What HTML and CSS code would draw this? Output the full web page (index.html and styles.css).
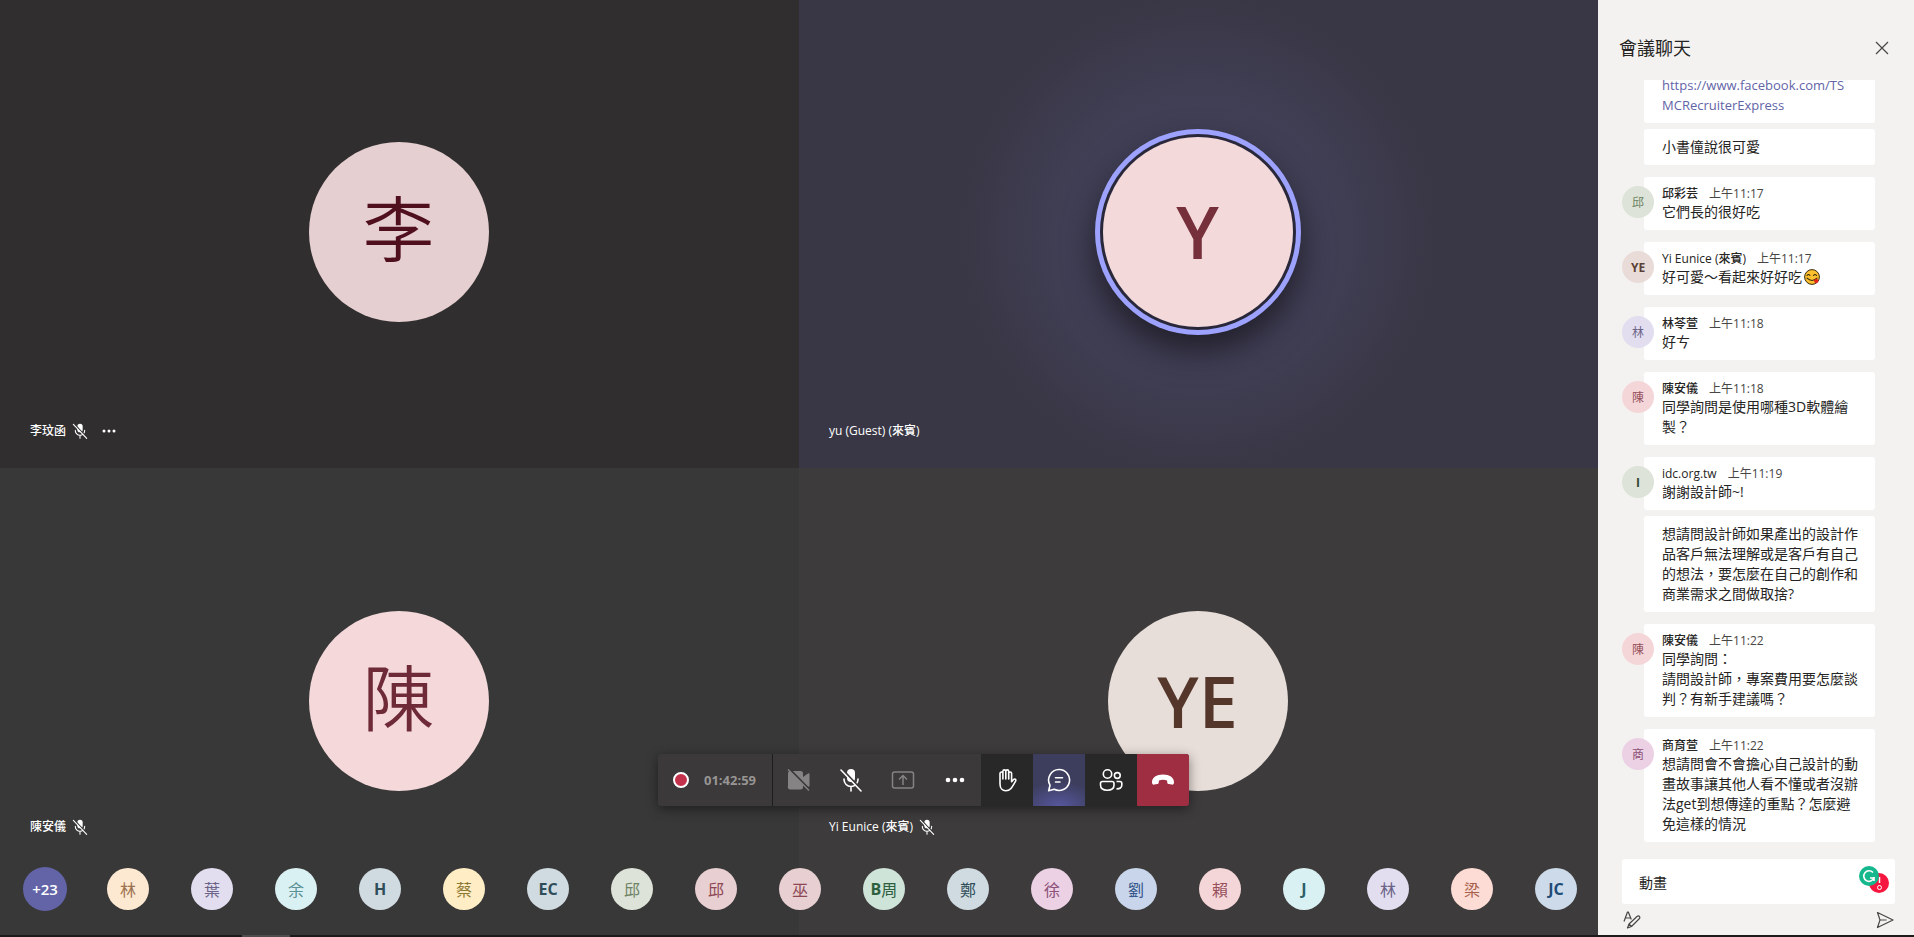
FILE: index.html
```html
<!DOCTYPE html>
<html lang="zh-Hant">
<head>
    <meta charset="UTF-8">
    <meta name="viewport" content="width=device-width, initial-scale=1.0">
    <title>會議聊天</title>
    <link rel="stylesheet" href="styles.css">
</head>
<body>

    <svg class="sprite" aria-hidden="true">
        <symbol id="mic-off" viewBox="0 0 24 24">
            <rect x="8" y="1" width="8" height="13" rx="4" fill="currentColor"/>
            <path d="M5 11v.5a7 7 0 0 0 14 0V11M12 18.500V23" fill="none" stroke="currentColor" stroke-width="1.600" stroke-linecap="round"/>
            <path d="M3.500 1.500l19 20.500" stroke="#3b393a" stroke-width="2"/>
            <path d="M2 2l20 21" stroke="currentColor" stroke-width="1.600" stroke-linecap="round"/>
        </symbol>
    </svg>

    <div class="app">
        <main class="stage">
            <section class="tile tile-li">
                <div class="face">李</div>
                <div class="name">李玟函
                    <svg class="name-mic"><use href="#mic-off"/></svg>
                    <button class="name-more" aria-label="更多選項">
                        <svg viewBox="0 0 14 4" width="14" height="4" fill="#fff"><circle cx="2" cy="2" r="1.500"/><circle cx="7" cy="2" r="1.500"/><circle cx="12" cy="2" r="1.500"/></svg>
                    </button>
                </div>
            </section>
            <section class="tile tile-yu">
                <div class="face face-speaking">Y</div>
                <div class="name">yu (Guest) (來賓)</div>
            </section>
            <section class="tile tile-chen">
                <div class="face">陳</div>
                <div class="name">陳安儀
                    <svg class="name-mic"><use href="#mic-off"/></svg>
                </div>
            </section>
            <section class="tile tile-ye">
                <div class="face">YE</div>
                <div class="name">Yi Eunice (來賓)
                    <svg class="name-mic"><use href="#mic-off"/></svg>
                </div>
            </section>

            <div class="strip">
                <button class="strip-more">+23</button>
                <ul class="people">
                    <li class="orange">林</li>
                    <li class="lilac">葉</li>
                    <li class="cyan">余</li>
                    <li class="steel"><b>H</b></li>
                    <li class="gold">蔡</li>
                    <li class="steel"><b>EC</b></li>
                    <li class="sage">邱</li>
                    <li class="rose">邱</li>
                    <li class="rose">巫</li>
                    <li class="mint"><b>B</b>周</li>
                    <li class="steel">鄭</li>
                    <li class="orchid">徐</li>
                    <li class="blue">劉</li>
                    <li class="pink">賴</li>
                    <li class="cyan dark"><b>J</b></li>
                    <li class="lilac">林</li>
                    <li class="peach">梁</li>
                    <li class="sky"><b>JC</b></li>
                </ul>
            </div>

            <div class="toolbar">
                <div class="record">
                    <span class="record-dot"></span>
                    <span>01:42:59</span>
                </div>
                <button class="off" aria-label="開啟相機">
                    <svg viewBox="0 0 24 24">
                        <path d="M3.500 3h10A2.500 2.500 0 0 1 16 5.500v3.500l5-3.500q1.500-1 1.500 1v11q0 2-1.500 1l-5-3.500v4a2.500 2.500 0 0 1-2.500 2.500h-10A2.500 2.500 0 0 1 1 18V5.500A2.500 2.500 0 0 1 3.500 3z" fill="currentColor"/>
                        <path d="M2.500 1l21 21.500" stroke="#3b393a" stroke-width="2"/>
                        <path d="M1 1.500l21 21" stroke="currentColor" stroke-width="1.500"/>
                    </svg>
                </button>
                <button aria-label="取消靜音">
                    <svg><use href="#mic-off"/></svg>
                </button>
                <button class="off" aria-label="分享">
                    <svg viewBox="0 0 24 24" fill="none" stroke="currentColor" stroke-width="1.500">
                        <rect x="1.500" y="4" width="21" height="16" rx="2"/>
                        <path d="M12 17V8M8 11.500L12 7.500l4 4"/>
                    </svg>
                </button>
                <button aria-label="更多動作">
                    <svg viewBox="0 0 24 24" fill="currentColor"><circle cx="5" cy="12" r="2.300"/><circle cx="12" cy="12" r="2.300"/><circle cx="19" cy="12" r="2.300"/></svg>
                </button>
                <button class="dark" aria-label="舉手">
                    <svg viewBox="1 0 24 24" fill="none" stroke="currentColor" stroke-width="1.600" stroke-linecap="round" stroke-linejoin="round">
                        <path d="M6 12V5.500a1.400 1.400 0 0 1 2.900 0V11V3.300a1.400 1.400 0 0 1 2.900 0V11V3.300a1.400 1.400 0 0 1 2.900 0V11V5.500a1.400 1.400 0 0 1 2.900 0v8.200l2-2.200c1-1 2.900-.2 2.100 1.400-1.700 3-3.200 5.800-5 7.800-1.300 1.400-2.800 2-5 2C8.500 22.700 6 20 6 16z"/>
                    </svg>
                </button>
                <button class="active" aria-label="聊天">
                    <svg viewBox="0 0 24 24" fill="none" stroke="currentColor" stroke-width="1.600" stroke-linecap="round" stroke-linejoin="round">
                        <path d="M12 1.500A10.500 10.500 0 1 1 7.200 21.300L1.700 22.700l1.300-5.500A10.500 10.500 0 0 1 12 1.500z"/>
                        <path d="M8.500 9.700h7M8.500 14h4.500"/>
                    </svg>
                </button>
                <button class="dark" aria-label="參與者">
                    <svg viewBox="0 0 24 24" fill="none" stroke="currentColor" stroke-width="1.600">
                        <circle cx="8.500" cy="6" r="4.200"/>
                        <circle cx="18.300" cy="7.500" r="2.900"/>
                        <path d="M3.500 13.500h9.500q2 0 2 2v1.500c0 3.500-2.500 5.200-6.700 5.200S1.500 20.500 1.500 17v-1.500q0-2 2-2z"/>
                        <path d="M17.500 13.500H21q1.800 0 1.800 1.800V17c0 2.700-2 4-5.300 3.900"/>
                    </svg>
                </button>
                <button class="hangup" aria-label="離開">
                    <svg viewBox="0 0 24 24"><path d="M12 6.500c6.500 0 11 3 11 7.500 0 2-.8 2.900-2.400 2.600l-2.700-.5c-1.300-.3-1.600-1-1.700-2.200l-.1-1.400q-4.100-1.500-8.200 0l-.1 1.400c-.1 1.200-.4 1.900-1.700 2.200l-2.700.5C1.800 16.900 1 16 1 14c0-4.500 4.500-7.500 11-7.500z" fill="currentColor"/></svg>
                </button>
            </div>
        </main>

        <aside class="chat">
            <header class="chat-head">
                <h1>會議聊天</h1>
                <button aria-label="關閉">
                    <svg viewBox="0 0 14 14" width="14" height="14"><path d="M1 1l12 12M13 1L1 13" stroke="#484644" stroke-width="1.200"/></svg>
                </button>
            </header>

            <div class="messages">
                <div class="group">
                    <div class="bubbles">
                        <div class="bubble"><a href="https://www.facebook.com/TSMCRecruiterExpress">https://www.facebook.com/TS<wbr>MCRecruiterExpress</a></div>
                        <div class="bubble">小書僮說很可愛</div>
                    </div>
                </div>
                <div class="group">
                    <div class="avatar sage">邱</div>
                    <div class="bubbles">
                        <div class="bubble">
                            <div class="meta"><b>邱彩芸</b><time>上午11:17</time></div>
                            它們長的很好吃
                        </div>
                    </div>
                </div>
                <div class="group">
                    <div class="avatar sand">YE</div>
                    <div class="bubbles">
                        <div class="bubble">
                            <div class="meta"><b>Yi Eunice (來賓)</b><time>上午11:17</time></div>
                            好可愛～看起來好好吃<svg class="emoji" viewBox="0 0 16 16">
                                <circle cx="8" cy="8" r="7.400" fill="#fdc02f" stroke="#3a2a10" stroke-width="1"/>
                                <path d="M3 6.500q1.500-2 3 0M9.500 6.500q1.500-2 3 0M3 9.200q5 4.500 10 0" fill="none" stroke="#3a2a10" stroke-width="1.100" stroke-linecap="round"/>
                                <path d="M10 11l3-1.500q2 2 .8 4-2.200 1.500-3.500-.5z" fill="#e2231a"/>
                            </svg>
                        </div>
                    </div>
                </div>
                <div class="group">
                    <div class="avatar lilac">林</div>
                    <div class="bubbles">
                        <div class="bubble">
                            <div class="meta"><b>林苓萱</b><time>上午11:18</time></div>
                            好ㄘ
                        </div>
                    </div>
                </div>
                <div class="group">
                    <div class="avatar pink">陳</div>
                    <div class="bubbles">
                        <div class="bubble">
                            <div class="meta"><b>陳安儀</b><time>上午11:18</time></div>
                            同學詢問是使用哪種3D軟體繪製？
                        </div>
                    </div>
                </div>
                <div class="group">
                    <div class="avatar sage dark">I</div>
                    <div class="bubbles">
                        <div class="bubble">
                            <div class="meta"><b>idc.org.tw</b><time>上午11:19</time></div>
                            謝謝設計師~!
                        </div>
                        <div class="bubble">想請問設計師如果產出的設計作品客戶無法理解或是客戶有自己的想法，要怎麼在自己的創作和商業需求之間做取捨?</div>
                    </div>
                </div>
                <div class="group">
                    <div class="avatar pink">陳</div>
                    <div class="bubbles">
                        <div class="bubble">
                            <div class="meta"><b>陳安儀</b><time>上午11:22</time></div>
                            同學詢問：<br>
                            請問設計師，專案費用要怎麼談判？有新手建議嗎？
                        </div>
                    </div>
                </div>
                <div class="group">
                    <div class="avatar orchid">商</div>
                    <div class="bubbles">
                        <div class="bubble">
                            <div class="meta"><b>商育萱</b><time>上午11:22</time></div>
                            想請問會不會擔心自己設計的動畫故事讓其他人看不懂或者沒辦法get到想傳達的重點？怎麼避免這樣的情況
                        </div>
                    </div>
                </div>
            </div>

            <div class="compose">
                <input type="text" value="動畫" aria-label="輸入新訊息">
                <svg class="checker" viewBox="0 0 32 28">
                    <circle cx="21" cy="17" r="10" fill="#f5173f"/>
                    <path d="M21.500 11v6" stroke="#fff" stroke-width="1.500"/>
                    <circle cx="21.500" cy="21.500" r="2" fill="none" stroke="#fff"/>
                    <circle cx="11" cy="10" r="10" fill="#15b88d"/>
                    <path d="M15 6.500A5.300 5.300 0 1 0 16 12h-4M16 11v4" fill="none" stroke="#fff" stroke-width="1.600"/>
                </svg>
            </div>
            <footer class="chat-foot">
                <button aria-label="格式">
                    <svg viewBox="0 0 18 18" width="18" height="18" fill="none" stroke="#484644" stroke-width="1.200" stroke-linejoin="round">
                        <path d="M1 10.500L4.500 1h.8l3 7.500M2.500 7H7.500"/>
                        <path d="M14 5.500q1.500-1.200 2.500 0 .9 1.200-.5 2.500l-7.500 7.500-4 1.500 1.500-4zM6 13l2.500 2.500"/>
                    </svg>
                </button>
                <button aria-label="傳送">
                    <svg viewBox="0 0 18 18" width="18" height="18" fill="none" stroke="#484644" stroke-width="1.200" stroke-linejoin="round"><path d="M1.500 1.500L17 9 1.500 16.500 4 9zM4 9h6.500"/></svg>
                </button>
            </footer>
        </aside>
    </div>
    <div class="taskbar"><span></span></div>

</body>
</html>
```
FILE: styles.css
```css
* {
    box-sizing: border-box;
}
body {
    margin: 0;
    height: 100vh;
    display: flex;
    flex-direction: column;
    overflow: hidden;
    background: #3b393a;
    font-family: "Open Sans", "Noto Sans CJK TC", sans-serif;
    color: #252423;
}
button {
    border: none;
    padding: 0;
    background: none;
    font: inherit;
    color: inherit;
    cursor: pointer;
}
button svg {
    display: block;
}
.sprite {
    position: absolute;
    width: 0;
    height: 0;
}
.app {
    flex: 1;
    min-height: 0;
    display: flex;
}

/* video stage */
.stage {
    position: relative;
    flex: 1;
    display: grid;
    grid-template-columns: 1fr 1fr;
    grid-template-rows: 1fr 1fr;
}
.tile {
    position: relative;
    padding-right: 2px;
    display: flex;
    align-items: center;
    justify-content: center;
}
.tile-li,
.tile-yu {
    padding-bottom: 3px;
}
.tile-li {
    background: #302e2f;
}
.tile-yu {
    background: radial-gradient(circle, #464560 0, #403f55 130px, #393745 240px);
}
.tile-chen {
    background: #383838;
}
.tile-ye {
    background: #3d3b3c;
}
.face {
    width: 180px;
    height: 180px;
    border-radius: 50%;
    display: flex;
    align-items: center;
    justify-content: center;
    font-size: 72px;
    line-height: 72px;
    font-weight: 600;
}
.tile-li .face,
.tile-chen .face {
    padding-bottom: 8px;
    font-weight: 350;
}
.tile-li .face {
    background: #e6cfd1;
    color: #500f1c;
}
.tile-chen .face {
    background: #f4d8da;
    color: #6e2a37;
}
.tile-ye .face {
    background: #e8ded9;
    color: #55362b;
    font-size: 70px;
}
.face-speaking {
    width: 190px;
    height: 190px;
    padding-bottom: 2px;
    background: #f4d9da;
    color: #75303b;
    box-shadow: 0 0 0 3px #29283a, 0 0 0 8px #9ea2ff, 0 16px 32px 8px rgba(25, 23, 30, 0.8);
}
.name {
    position: absolute;
    left: 30px;
    bottom: 29px;
    height: 16px;
    display: flex;
    align-items: center;
    gap: 6px;
    font-size: 12px;
    line-height: 16px;
    font-weight: 500;
    color: #fff;
}
.tile-chen .name,
.tile-ye .name {
    bottom: 100px;
}
.name-mic {
    width: 16px;
    height: 16px;
}
.name-more {
    margin-left: 8px;
}

/* other participants */
.strip {
    position: absolute;
    left: 0;
    right: 0;
    bottom: 24px;
    padding: 0 21px 0 23px;
    display: flex;
    align-items: center;
    gap: 40px;
}
.strip-more {
    width: 44px;
    height: 44px;
    border-radius: 50%;
    background: #6264a7;
    color: #fff;
    font-size: 15px;
    font-weight: 600;
}
.people {
    flex: 1;
    margin: 0;
    padding: 0;
    list-style: none;
    display: flex;
    justify-content: space-between;
}
.people li {
    width: 42px;
    height: 42px;
    border-radius: 50%;
    display: flex;
    align-items: center;
    justify-content: center;
    font-size: 16px;
}
.people b {
    font-weight: 700;
}

.orange { background: #fde8d2; color: #9c7350; }
.lilac { background: #e2def0; color: #6b6387; }
.cyan { background: #daf1f3; color: #5b9297; }
.cyan.dark { color: #2d5f68; }
.steel { background: #d0dbe1; color: #2f4d59; }
.gold { background: #ffeec5; color: #8c7832; }
.sage { background: #dde3d8; color: #6c8263; }
.sage.dark { color: #35452f; }
.rose { background: #e8cfd2; color: #8d4753; }
.mint { background: #cfe4d8; color: #2e6040; }
.orchid { background: #ebd1e3; color: #8d5078; }
.blue { background: #c8d5ea; color: #35558c; }
.pink { background: #f5d6d8; color: #96505c; }
.peach { background: #fddcd5; color: #a55f4d; }
.sky { background: #cddaea; color: #204b75; }
.sand { background: #e9dcd8; color: #5b4036; }

/* call controls */
.toolbar {
    position: absolute;
    right: 409px;
    bottom: 129px;
    height: 52px;
    display: flex;
    border-radius: 3px;
    overflow: hidden;
    background: #3b393a;
    box-shadow: 0 3px 12px rgba(0, 0, 0, 0.45);
    color: #fff;
}
.record {
    width: 115px;
    padding-left: 15px;
    border-right: 1px solid #1f1e1e;
    display: flex;
    align-items: center;
    gap: 15px;
    font-size: 13px;
    font-weight: 700;
    color: #979593;
}
.record-dot {
    width: 16px;
    height: 16px;
    border: 2px solid #fff;
    border-radius: 50%;
    background: #c4314b;
}
.toolbar button {
    width: 52px;
    display: flex;
    align-items: center;
    justify-content: center;
}
.toolbar svg {
    width: 24px;
    height: 24px;
}
.toolbar .off {
    color: #858383;
}
.toolbar .dark {
    background: #292828;
}
.toolbar .active {
    background: radial-gradient(ellipse 40px 24px at bottom, #56569c 0, #3d3e5e 100%);
}
.toolbar .hangup {
    background: #a02e43;
}

/* chat pane */
.chat {
    width: 316px;
    background: #f3f2f1;
    display: flex;
    flex-direction: column;
}
.chat-head {
    height: 80px;
    padding: 16px 25px 0 21px;
    display: flex;
    align-items: center;
    justify-content: space-between;
}
.chat-head h1 {
    margin: 0;
    font-size: 18px;
    line-height: 24px;
    font-weight: 400;
}
.messages {
    flex: 1;
    min-height: 0;
    overflow: hidden;
    padding: 0 39px 0 24px;
    display: flex;
    flex-direction: column;
    justify-content: flex-end;
    gap: 12px;
}
.group {
    flex-shrink: 0;
    position: relative;
    padding-left: 22px;
}
.avatar {
    position: absolute;
    left: 0;
    top: 9px;
    width: 32px;
    height: 32px;
    border-radius: 50%;
    display: flex;
    align-items: center;
    justify-content: center;
    font-size: 12px;
}
.avatar.sand,
.avatar.dark {
    font-weight: 700;
}
.bubbles {
    display: flex;
    flex-direction: column;
    gap: 6px;
}
.bubble {
    padding: 8px 16px 8px 18px;
    border-radius: 3px;
    background: #fff;
    font-size: 14px;
    line-height: 20px;
    overflow-wrap: anywhere;
}
.bubble a {
    font-size: 13px;
    color: #6264a7;
    text-decoration: none;
}
.meta {
    height: 17px;
    display: flex;
    gap: 11px;
    font-size: 12px;
    line-height: 17px;
}
.meta b {
    font-weight: 500;
}
.meta time {
    color: #484644;
}
.emoji {
    width: 16px;
    height: 16px;
    margin-left: 2px;
    vertical-align: -3px;
}
.compose {
    position: relative;
    margin: 17px 19px 0 24px;
}
.compose input {
    display: block;
    width: 100%;
    height: 45px;
    padding: 0 60px 0 17px;
    border: none;
    border-radius: 3px;
    outline: none;
    background: #fff;
    font: inherit;
    font-size: 14px;
    color: inherit;
}
.checker {
    position: absolute;
    right: 5px;
    top: 7px;
    width: 32px;
    height: 28px;
}
.chat-foot {
    height: 31px;
    padding: 0 20px 0 25px;
    display: flex;
    align-items: center;
    justify-content: space-between;
}

.taskbar {
    height: 2px;
    padding-left: 242px;
    background: #1d1a1b;
}
.taskbar span {
    display: block;
    width: 48px;
    height: 2px;
    background: #4e4c4d;
}
```
